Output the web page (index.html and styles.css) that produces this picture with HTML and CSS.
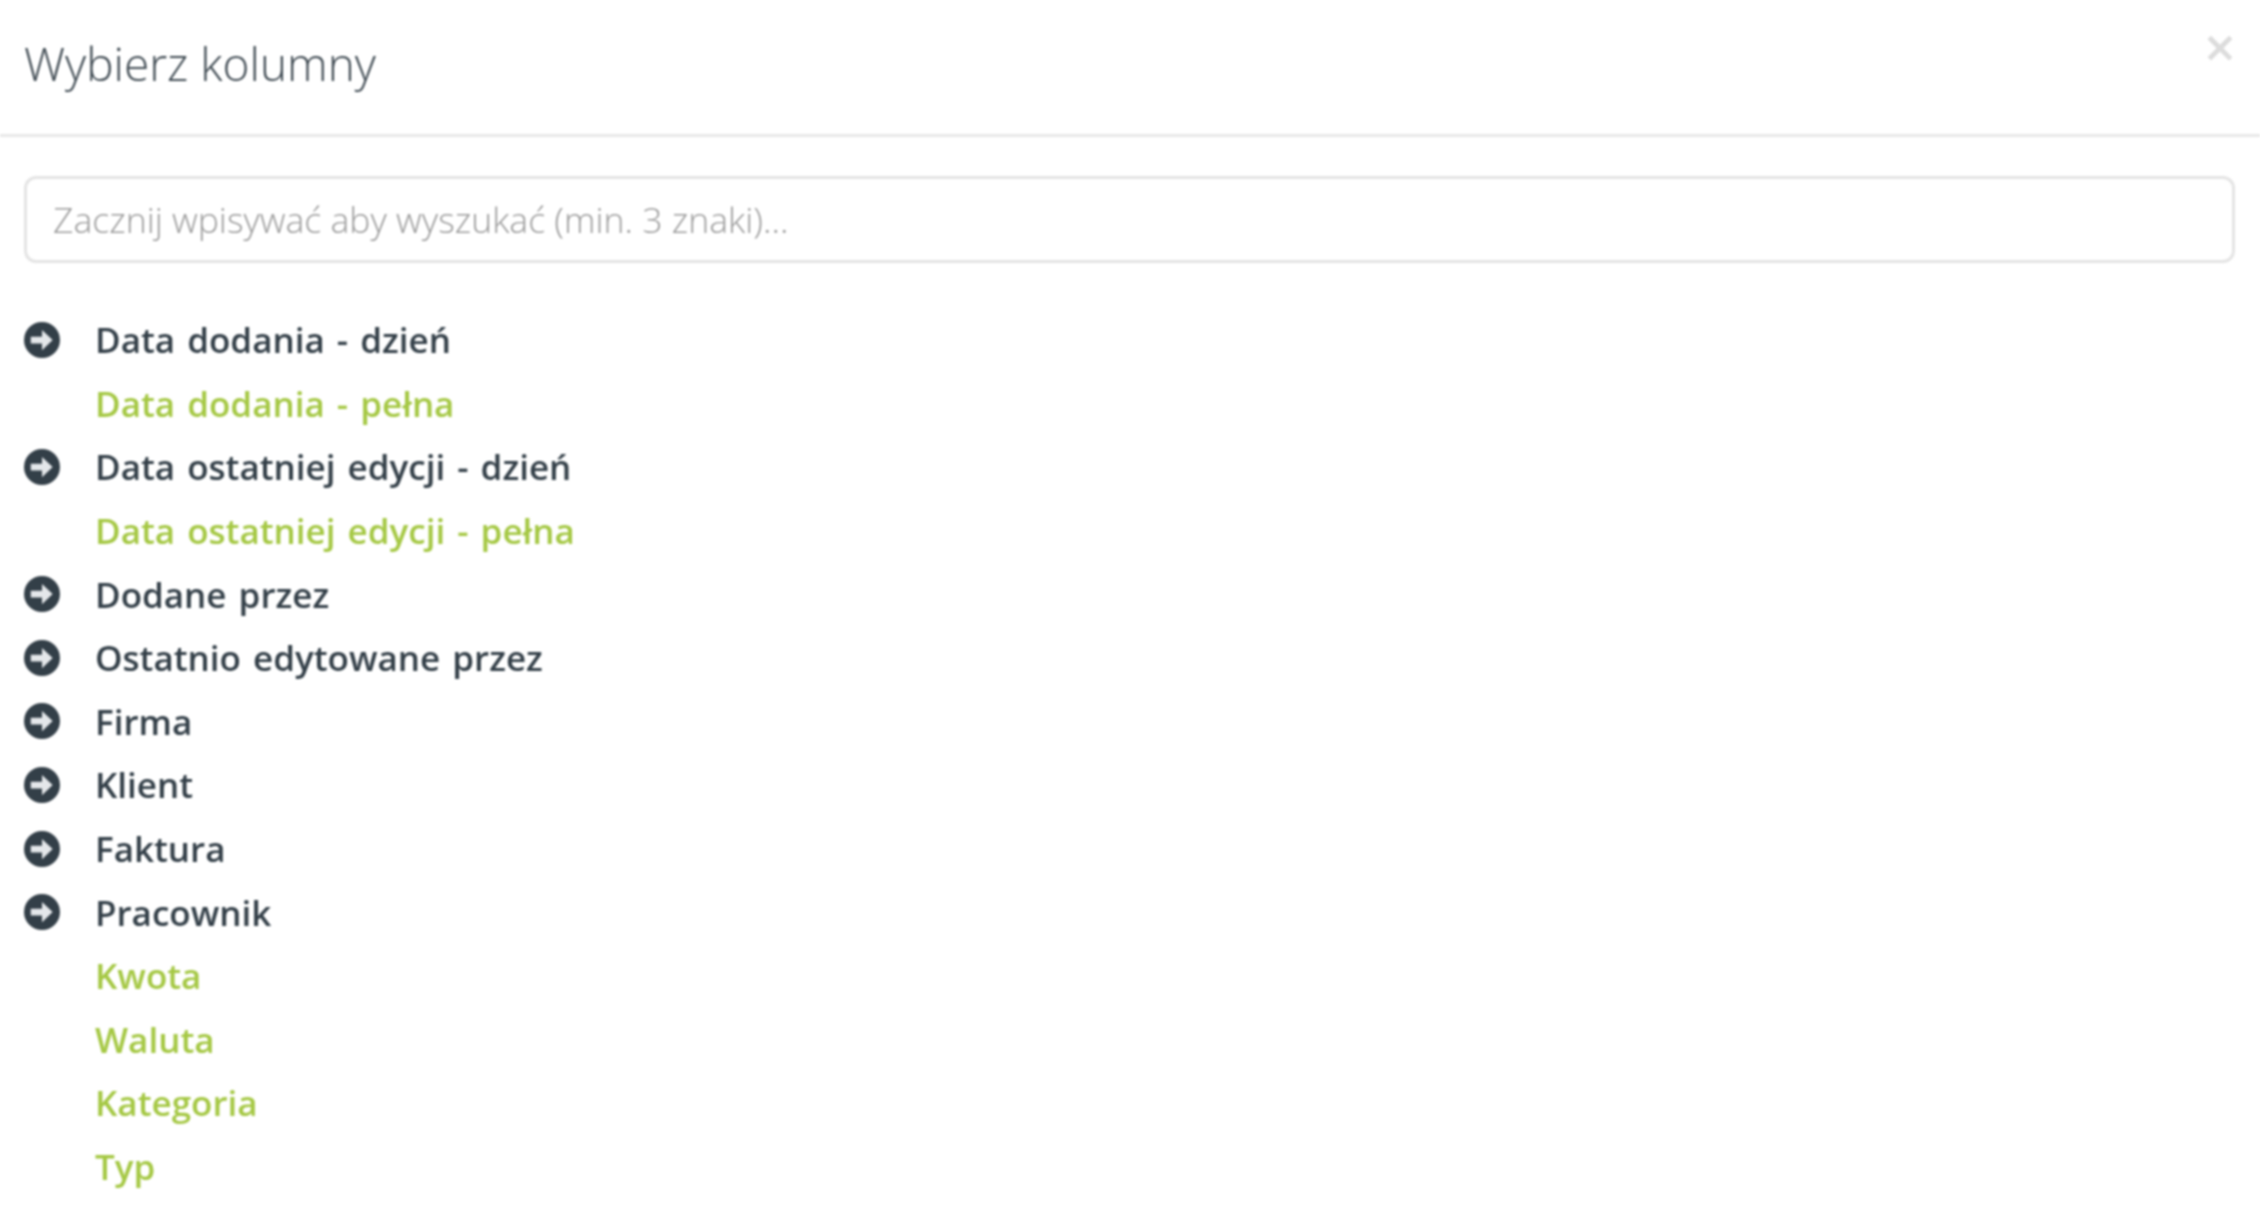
FILE: index.html
```html
<!DOCTYPE html>
<html lang="pl">
<head>
    <meta charset="UTF-8">
    <title>Wybierz kolumny</title>
    <link rel="stylesheet" href="styles.css">
</head>
<body>

    <div class="modal">
        <div class="modal-header">
            <h4 class="modal-title">Wybierz kolumny</h4>
            <span class="close">×</span>
        </div>

        <div class="modal-body">
            <input type="text" class="search" placeholder="Zacznij wpisywać aby wyszukać (min. 3 znaki)...">

            <ul class="columns">
                <li><svg class="arrow" viewBox="0 0 32 32"><circle cx="16" cy="16" r="16"/><path d="M6 13h10V7l9.500 9-9.500 9v-6H6z"/></svg>Data dodania - dzień</li>
                <li class="selected">Data dodania - pełna</li>
                <li><svg class="arrow" viewBox="0 0 32 32"><circle cx="16" cy="16" r="16"/><path d="M6 13h10V7l9.500 9-9.500 9v-6H6z"/></svg>Data ostatniej edycji - dzień</li>
                <li class="selected">Data ostatniej edycji - pełna</li>
                <li><svg class="arrow" viewBox="0 0 32 32"><circle cx="16" cy="16" r="16"/><path d="M6 13h10V7l9.500 9-9.500 9v-6H6z"/></svg>Dodane przez</li>
                <li><svg class="arrow" viewBox="0 0 32 32"><circle cx="16" cy="16" r="16"/><path d="M6 13h10V7l9.500 9-9.500 9v-6H6z"/></svg>Ostatnio edytowane przez</li>
                <li><svg class="arrow" viewBox="0 0 32 32"><circle cx="16" cy="16" r="16"/><path d="M6 13h10V7l9.500 9-9.500 9v-6H6z"/></svg>Firma</li>
                <li><svg class="arrow" viewBox="0 0 32 32"><circle cx="16" cy="16" r="16"/><path d="M6 13h10V7l9.500 9-9.500 9v-6H6z"/></svg>Klient</li>
                <li><svg class="arrow" viewBox="0 0 32 32"><circle cx="16" cy="16" r="16"/><path d="M6 13h10V7l9.500 9-9.500 9v-6H6z"/></svg>Faktura</li>
                <li><svg class="arrow" viewBox="0 0 32 32"><circle cx="16" cy="16" r="16"/><path d="M6 13h10V7l9.500 9-9.500 9v-6H6z"/></svg>Pracownik</li>
                <li class="selected">Kwota</li>
                <li class="selected">Waluta</li>
                <li class="selected">Kategoria</li>
                <li class="selected">Typ</li>
            </ul>
        </div>
    </div>

</body>
</html>
```

FILE: styles.css
```css
html, body {
    height: 100%;
}

body {
    margin: 0;
    background: white;
    color: #333f48;
    font-family: "Open Sans", sans-serif;
    overflow: hidden;
}

.modal {
    filter: blur(1px);
}

/* Header */
.modal-header {
    display: flex;
    justify-content: space-between;
    height: 134px;
    padding: 0 24px;
    border-bottom: 3px solid #e8e8e8;
}

.modal-title {
    margin: 0;
    padding-top: 33px;
    font-size: 46px;
    line-height: 60px;
    font-weight: 300;
    color: #3f4a52;
}

.close {
    margin: 21px 0 0 0;
    font-size: 56px;
    line-height: 50px;
    font-weight: 600;
    color: #dcdcdc;
}

/* Body */
.modal-body {
    padding: 39px 25px 0 24px;
}

.search {
    display: block;
    box-sizing: border-box;
    width: 100%;
    height: 87px;
    padding: 0 26px 2px;
    border: 3px solid #e4e4e4;
    border-radius: 12px;
    outline: none;
    font-family: inherit;
    font-size: 35.6px;
    font-weight: 300;
}

.search::placeholder {
    color: #9a9a9a;
    opacity: 1;
}

/* Column list */
.columns {
    list-style: none;
    margin: 45px 0 0;
    padding: 0;
}

.columns li {
    display: flex;
    align-items: center;
    height: 63.6px;
    padding-left: 71px;
    font-size: 35px;
    font-weight: 600;
    word-spacing: 3px;
}

.columns .selected {
    color: #a5c844;
}

.arrow {
    flex: none;
    width: 36px;
    height: 36px;
    margin-left: -71px;
    margin-right: 35px;
    fill: #333f48;
}

.arrow path {
    fill: #e4e7ea;
}
```
